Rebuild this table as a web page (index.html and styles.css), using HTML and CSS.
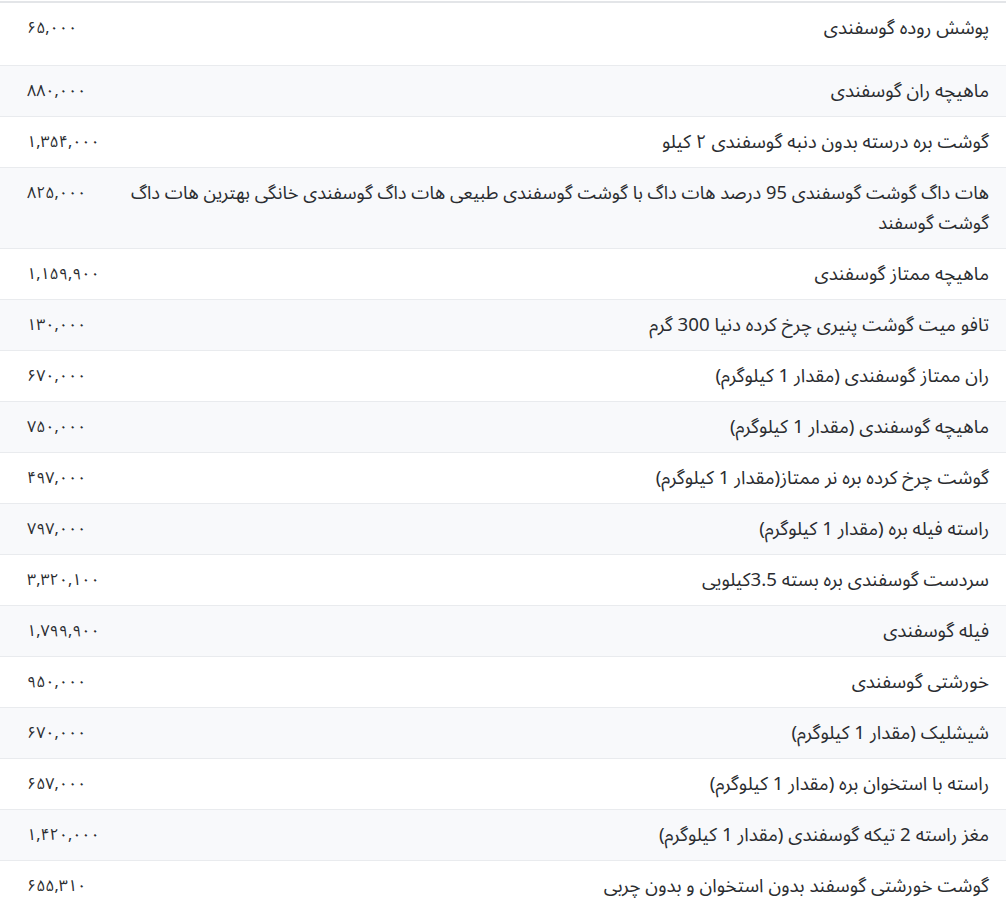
FILE: index.html
```html
<!DOCTYPE html>
<html lang="fa" dir="rtl">
<head>
<meta charset="utf-8">
<title>قیمت گوشت گوسفندی</title>
<link rel="stylesheet" href="styles.css">
</head>
<body>
<div class="wrap">
<table class="prices">
<tbody>
<tr class="first"><td class="name">پوشش روده گوسفندی</td><td class="price">۶۵,۰۰۰</td></tr>
<tr><td class="name">ماهیچه ران گوسفندی</td><td class="price">۸۸۰,۰۰۰</td></tr>
<tr><td class="name">گوشت بره درسته بدون دنبه گوسفندی ۲ کیلو</td><td class="price">۱,۳۵۴,۰۰۰</td></tr>
<tr><td class="name narrow">هات داگ گوشت گوسفندی 95 درصد هات داگ با گوشت گوسفندی طبیعی هات داگ گوسفندی خانگی بهترین هات داگ گوشت گوسفند</td><td class="price">۸۲۵,۰۰۰</td></tr>
<tr><td class="name">ماهیچه ممتاز گوسفندی</td><td class="price">۱,۱۵۹,۹۰۰</td></tr>
<tr><td class="name">تافو میت گوشت پنیری چرخ کرده دنیا 300 گرم</td><td class="price">۱۳۰,۰۰۰</td></tr>
<tr><td class="name">ران ممتاز گوسفندی (مقدار 1 کیلوگرم)</td><td class="price">۶۷۰,۰۰۰</td></tr>
<tr><td class="name">ماهیچه گوسفندی (مقدار 1 کیلوگرم)</td><td class="price">۷۵۰,۰۰۰</td></tr>
<tr><td class="name">گوشت چرخ کرده بره نر ممتاز(مقدار 1 کیلوگرم)</td><td class="price">۴۹۷,۰۰۰</td></tr>
<tr><td class="name">راسته فیله بره (مقدار 1 کیلوگرم)</td><td class="price">۷۹۷,۰۰۰</td></tr>
<tr><td class="name">سردست گوسفندی بره بسته 3.5کیلویی</td><td class="price">۳,۳۲۰,۱۰۰</td></tr>
<tr><td class="name">فیله گوسفندی</td><td class="price">۱,۷۹۹,۹۰۰</td></tr>
<tr><td class="name">خورشتی گوسفندی</td><td class="price">۹۵۰,۰۰۰</td></tr>
<tr><td class="name">شیشلیک (مقدار 1 کیلوگرم)</td><td class="price">۶۷۰,۰۰۰</td></tr>
<tr><td class="name">راسته با استخوان بره (مقدار 1 کیلوگرم)</td><td class="price">۶۵۷,۰۰۰</td></tr>
<tr><td class="name">مغز راسته 2 تیکه گوسفندی (مقدار 1 کیلوگرم)</td><td class="price">۱,۴۲۰,۰۰۰</td></tr>
<tr><td class="name">گوشت خورشتی گوسفند بدون استخوان و بدون چربی</td><td class="price">۶۵۵,۳۱۰</td></tr>
</tbody>
</table>
</div>
</body>
</html>
```

FILE: styles.css
```css
html, body {
  margin: 0;
  padding: 0;
  background: #ffffff;
}

body {
  font-family: "Noto Sans Arabic", "DejaVu Sans", sans-serif;
  font-size: 16px;
  color: #2a2c30;
}

.wrap {
  padding-top: 1px;
}

.prices {
  width: 100%;
  border-collapse: collapse;
  border-top: 2px solid #e3e5e8;
}

.prices td {
  padding: 10px 0;
  line-height: 30px;
  vertical-align: top;
  border-bottom: 1px solid #e9ebee;
}

.prices tr:nth-child(even) td {
  background: #f8f9fb;
}

.prices .first td {
  padding-bottom: 22px;
}

.name {
  text-align: right;
  font-size: 18.7px;
  padding-right: 17px !important;
  padding-left: 8px !important;
}

.narrow {
  font-size: 18.3px;
}

.price {
  width: 83px;
  text-align: left;
  padding-left: 27px !important;
  white-space: nowrap;
}
```
